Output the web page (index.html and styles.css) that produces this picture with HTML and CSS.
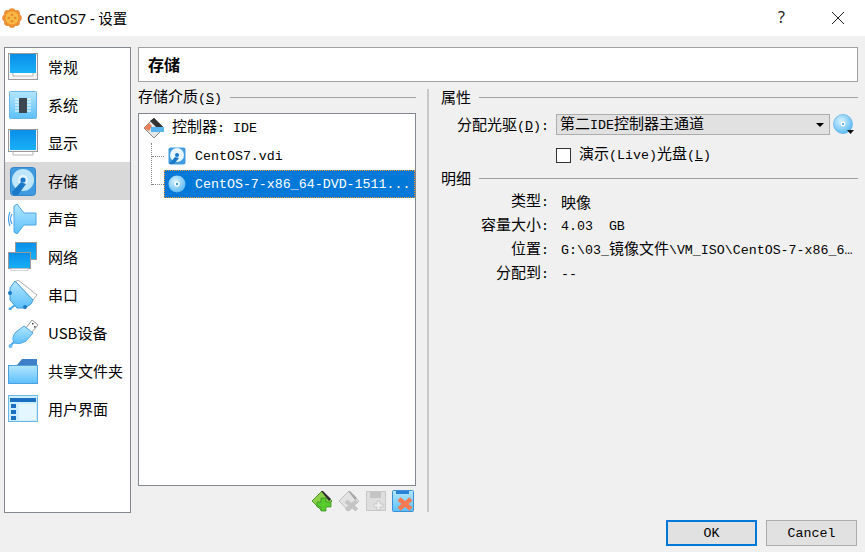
FILE: index.html
```html
<!DOCTYPE html>
<html lang="zh-CN">

<head>
     <meta charset="UTF-8">
     <title>CentOS7 - 设置</title>
     <link rel="stylesheet" href="styles.css">
</head>

<body>
     <svg class="defs" aria-hidden="true">
          <defs>
               <linearGradient id="screen" x1="0" y1="0" x2="0" y2="1">
                    <stop offset="0" stop-color="#0a8ee8"/>
                    <stop offset="1" stop-color="#19b0f8"/>
               </linearGradient>
               <linearGradient id="light" x1="0" y1="0" x2="0" y2="1">
                    <stop offset="0" stop-color="#b4e6ff"/>
                    <stop offset="1" stop-color="#5cc0fa"/>
               </linearGradient>
               <radialGradient id="disc" cx=".4" cy=".35" r=".75">
                    <stop offset="0" stop-color="#d8f2ff"/>
                    <stop offset="1" stop-color="#4db4f2"/>
               </radialGradient>
          </defs>
     </svg>

     <header class="titlebar">
          <svg class="app-icon" width="20" height="20" viewBox="0 0 20 20">
               <g fill="#ee8f35">
                    <circle cx="10" cy="3.6" r="3.4"/><circle cx="10" cy="16.4" r="3.4"/>
                    <circle cx="3.6" cy="10" r="3.4"/><circle cx="16.4" cy="10" r="3.4"/>
                    <circle cx="5.5" cy="5.5" r="3.4"/><circle cx="14.5" cy="5.5" r="3.4"/>
                    <circle cx="5.5" cy="14.5" r="3.4"/><circle cx="14.5" cy="14.5" r="3.4"/>
               </g>
               <circle cx="10" cy="10" r="6.6" fill="#f8b844"/>
               <g fill="#e8862c">
                    <circle cx="10" cy="6.8" r="1.3"/><circle cx="10" cy="13.2" r="1.3"/>
                    <circle cx="6.8" cy="10" r="1.3"/><circle cx="13.2" cy="10" r="1.3"/>
               </g>
          </svg>
          <span class="title-text">CentOS7 - 设置</span>
          <span class="help">?</span>
          <svg class="close" width="14" height="14" viewBox="0 0 14 14">
               <path d="M1 1l12 12M13 1L1 13" stroke="#222" fill="none"/>
          </svg>
     </header>

     <div class="body">
          <nav class="sidebar">
               <a class="nav-item">
                    <svg width="30" height="28" viewBox="0 0 30 28"><rect x=".5" y=".5" width="29" height="26" fill="#f4f4f4" stroke="#9a9a9a"/><rect x="2" y="1" width="26" height="19" fill="url(#screen)"/><path d="M5 20v3h20v-3" fill="#fff" stroke="#b5b5b5"/></svg>
                    <span>常规</span>
               </a>
               <a class="nav-item">
                    <svg width="30" height="28" viewBox="0 0 30 28"><rect x="1.5" y=".5" width="27" height="27" rx="1" fill="url(#light)" stroke="#6cb6e8"/><path d="M7 8h16M7 11h16M7 14h16M7 17h16M7 20h16" stroke="#fff"/><rect x="11" y="7" width="8" height="15" fill="#3c4650"/></svg>
                    <span>系统</span>
               </a>
               <a class="nav-item">
                    <svg width="30" height="28" viewBox="0 0 30 28"><rect x=".5" y=".5" width="29" height="22" fill="#f4f4f4" stroke="#9a9a9a"/><rect x="2" y="1" width="26" height="20" fill="url(#screen)"/><path d="M5 23v3h20v-3" fill="#fff" stroke="#b5b5b5"/></svg>
                    <span>显示</span>
               </a>
               <a class="nav-item is-active">
                    <svg width="30" height="30" viewBox="0 0 30 30"><rect x="2.5" y="1.5" width="25" height="28" rx="3" fill="#3f9be0" stroke="#2f86cc"/><circle cx="15" cy="14" r="11" fill="#bfe6fb"/><circle cx="15" cy="14" r="5" fill="#e4f5ff"/><path d="M4 26l9-10 5 2-8 11H5z" fill="#1b78c8"/><circle cx="15" cy="14" r="2.6" fill="#1b78c8"/></svg>
                    <span>存储</span>
               </a>
               <a class="nav-item">
                    <svg width="30" height="30" viewBox="0 0 30 30"><path d="M6 2l3-2 7 9h12v12H16l-7 9-3-2z" fill="url(#light)" stroke="#4ea8e8"/><path d="M4 10q-3 5 0 10M2 8q-3 7 0 14" stroke="#3d9ae0" stroke-width="1.1" fill="none"/></svg>
                    <span>声音</span>
               </a>
               <a class="nav-item">
                    <svg width="30" height="30" viewBox="0 0 30 30"><rect x="7.5" y=".5" width="21" height="17" fill="url(#screen)" stroke="#9a9a9a"/><rect x=".5" y="10.5" width="22" height="16" fill="url(#screen)" stroke="#9a9a9a"/><path d="M3 26.5h17v2H3z" fill="#fff" stroke="#b5b5b5" stroke-width=".6"/></svg>
                    <span>网络</span>
               </a>
               <a class="nav-item">
                    <svg width="30" height="30" viewBox="0 0 30 30"><path d="M10 0l19 15-4 5L7 2z" fill="#fff" stroke="#aaa"/><path d="M7 1l18 19-2 4-6 4H9L2 20V8z" fill="url(#light)" stroke="#3d9ae0"/><path d="M7 25l-5 4" stroke="#4ea8e8" stroke-width="2"/><circle cx="2" cy="13" r="2" fill="#1b78c8"/><circle cx="17" cy="27" r="2" fill="#1b78c8"/><circle cx="2" cy="29" r="1.5" fill="#4ea8e8"/></svg>
                    <span>串口</span>
               </a>
               <a class="nav-item">
                    <svg width="30" height="30" viewBox="0 0 30 30"><path d="M18 10l6-8 6 5-7 8z" fill="#fff" stroke="#999"/><path d="M24 5h1.5v1.5H24zM26 8h1.5v1.5H26z" fill="#444"/><path d="M16 8l9 7-7 8q-6 4-12 2-3-6 2-11z" fill="url(#light)" stroke="#4ea8e8"/><path d="M6 24l-4 4" stroke="#4ea8e8" stroke-width="2"/><circle cx="2.5" cy="28" r="2" fill="#6cbcf0"/></svg>
                    <span>USB设备</span>
               </a>
               <a class="nav-item">
                    <svg width="30" height="26" viewBox="0 0 30 26"><path d="M1 8l8-1 5-6h15v8z" fill="#3d80c8"/><rect x=".5" y="7.5" width="29" height="18" fill="url(#light)" stroke="#4ea0e0"/></svg>
                    <span>共享文件夹</span>
               </a>
               <a class="nav-item">
                    <svg width="30" height="28" viewBox="0 0 30 28"><rect x=".5" y=".5" width="29" height="26" fill="#cdeeff" stroke="#6cb6e8"/><rect x="2" y="3" width="26" height="4" fill="#1b6fc0"/><path d="M3 9h5v4H3zM3 15h5v4H3zM3 21h5v4H3z" fill="#1b6fc0"/><rect x="11" y="9" width="17" height="16" fill="#e4f6ff"/></svg>
                    <span>用户界面</span>
               </a>
          </nav>

          <main class="page">
               <h1 class="page-title">存储</h1>
               <div class="columns">
                    <section class="media">
                         <div class="group-head"><span>存储介质<span class="mono">(<u>S</u>)</span></span></div>
                         <div class="tree">
                              <div class="tree-row is-controller">
                                   <svg width="22" height="22" viewBox="0 0 22 22"><path d="M11 1l10 10-10 10L1 11z" fill="#e6e6e6" stroke="#888"/><path d="M11 1l10 10-4 3L7 4z" fill="#333"/><path d="M1 11l5-5 3 3-3 5z" fill="#e8805a"/><rect x="8" y="10" width="13" height="5" fill="#58b4f0"/></svg>
                                   <span>控制器<span class="mono">: IDE</span></span>
                              </div>
                              <div class="tree-row is-child">
                                   <svg width="18" height="18" viewBox="0 0 18 18"><rect x=".5" y=".5" width="17" height="17" rx="2" fill="#3f9be0"/><circle cx="9" cy="8" r="7" fill="#e8f7ff"/><path d="M1 17l6-7 4 1-5 6z" fill="#1b78c8"/><circle cx="9" cy="8" r="2" fill="#1b78c8"/></svg>
                                   <span class="mono">CentOS7.vdi</span>
                              </div>
                              <div class="tree-row is-child is-selected">
                                   <svg width="18" height="18" viewBox="0 0 18 18"><circle cx="9" cy="9" r="8.5" fill="url(#disc)"/><circle cx="9" cy="9" r="2.6" fill="#fff"/><circle cx="9" cy="9" r="1.2" fill="#3b9be0"/></svg>
                                   <span class="mono">CentOS-7-x86_64-DVD-1511...</span>
                              </div>
                         </div>
                         <div class="tree-tools">
                              <svg width="22" height="22" viewBox="0 0 22 22"><path d="M11 1l10 10-10 10L1 11z" fill="#8ccf4a" stroke="#4f9c2a"/><path d="M10 1h2l8 8-2 2z" fill="#2e2e2e"/><path d="M10 8h5v4h5v5h-5v4h-5v-4H6v-5h4z" fill="#58cc2c" stroke="#2f8a1c" stroke-width=".7"/></svg>
                              <svg width="22" height="22" viewBox="0 0 22 22"><path d="M11 1l10 10-10 10L1 11z" fill="#e2e2e2" stroke="#c0c0c0"/><path d="M10 1h2l7 7-2 2z" fill="#a8a8a8"/><path d="M8 11l11 9M19 11L8 20" stroke="#c4c4c4" stroke-width="4" fill="none"/></svg>
                              <svg width="22" height="22" viewBox="0 0 22 22"><rect x="1.5" y="1.5" width="19" height="19" fill="#dedede" stroke="#c8c8c8"/><rect x="5" y="2" width="11" height="6" fill="#c4c4c4"/><path d="M12 11h3v3h3v3h-3v3h-3v-3H9v-3h3z" fill="#eee" stroke="#bbb" stroke-width=".6"/></svg>
                              <svg width="22" height="22" viewBox="0 0 22 22"><rect x=".5" y=".5" width="21" height="21" rx="1" fill="url(#light)" stroke="#3a8fd8"/><rect x="4" y="1" width="13" height="3" fill="#2a82d4"/><path d="M7 9l12 10M19 9L7 19" stroke="#f47a52" stroke-width="4.5" fill="none"/></svg>
                         </div>
                    </section>

                    <section class="props">
                         <div class="group-head"><span>属性</span></div>
                         <div class="prop-row prop-drive">
                              <label class="prop-label">分配光驱<span class="mono">(<u>D</u>):</span></label>
                              <div class="select">
                                   <span>第二<span class="mono">IDE</span>控制器主通道</span>
                                   <i class="caret"></i>
                              </div>
                              <svg class="disc-btn" width="22" height="22" viewBox="0 0 22 22"><circle cx="10" cy="10" r="9.5" fill="url(#disc)" stroke="#4ea8e8" stroke-width=".6"/><circle cx="10" cy="10" r="2.4" fill="#fff"/><circle cx="10" cy="10" r="1" fill="#3b9be0"/><path d="M14 16h7l-3.5 4z" fill="#111"/></svg>
                         </div>
                         <div class="live">
                              <i class="checkbox"></i>
                              <span>演示<span class="mono">(Live)</span>光盘<span class="mono">(<u>L</u>)</span></span>
                         </div>
                         <div class="group-head group-details"><span>明细</span></div>
                         <dl class="details">
                              <dt>类型<span class="mono">:</span></dt><dd>映像</dd>
                              <dt>容量大小<span class="mono">:</span></dt><dd><span class="mono">4.03  GB</span></dd>
                              <dt>位置<span class="mono">:</span></dt><dd><span class="mono">G:\03_</span>镜像文件<span class="mono">\VM_ISO\CentOS-7-x86_6…</span></dd>
                              <dt>分配到<span class="mono">:</span></dt><dd><span class="mono">--</span></dd>
                         </dl>
                    </section>
               </div>
          </main>
     </div>

     <footer class="actions">
          <button class="btn is-default">OK</button>
          <button class="btn">Cancel</button>
     </footer>
</body>
</html>
```

FILE: styles.css
```css
html {
     box-sizing: border-box;
     font-family: "Noto Sans CJK SC", sans-serif;
     font-size: 15px;
}

*,
*:before,
*:after {
     box-sizing: inherit;
}

body {
     margin: 0;
     width: 865px;
     height: 552px;
     overflow: hidden;
     display: flex;
     flex-direction: column;
     background-color: #f0f0f0;
     color: #000;
}

.defs {
     position: absolute;
     width: 0;
     height: 0;
}

.mono {
     font-family: "Liberation Mono", monospace;
     font-size: 13.3px;
     white-space: pre;
}

.titlebar {
     height: 36px;
     flex: none;
     display: flex;
     align-items: center;
     padding-left: 2px;
     background-color: #fff;
}

.title-text {
     margin-left: 5px;
     padding-bottom: 2px;
     font-family: "Noto Sans", "Noto Sans CJK SC", sans-serif;
     font-size: 14.5px;
}

.help {
     margin-left: auto;
     padding-bottom: 2px;
     font-family: "Noto Sans", sans-serif;
     font-size: 16px;
     color: #222;
}

.close {
     margin-left: 46px;
     margin-right: 20px;
}

.body {
     flex: none;
     height: 477px;
     padding: 11px 7px 0 4px;
     display: flex;
     gap: 7px;
}

.sidebar {
     width: 127px;
     height: 466px;
     flex: none;
     display: flex;
     flex-direction: column;
     border: 1px solid #828790;
     background-color: #fff;
}

.nav-item {
     height: 38px;
     flex: none;
     display: flex;
     align-items: center;
     padding-left: 3px;
}

.nav-item svg {
     width: 30px;
     flex: none;
}

.nav-item span {
     margin-left: 10px;
     padding-bottom: 2px;
     white-space: nowrap;
}

.nav-item.is-active {
     background-color: #d9d9d9;
}

.page {
     width: 720px;
     display: flex;
     flex-direction: column;
}

.page-title {
     margin: 0;
     height: 35px;
     padding-left: 9px;
     border: 1px solid #a0a0a0;
     background-color: #fff;
     font-size: 16px;
     font-weight: 700;
     line-height: 33px;
}

.columns {
     flex-grow: 1;
     padding-top: 7px;
     display: flex;
}

.media {
     width: 278px;
     flex: none;
     display: flex;
     flex-direction: column;
}

.group-head {
     height: 16px;
     display: flex;
     align-items: center;
     gap: 8px;
     white-space: nowrap;
}

.group-head span {
     line-height: 16px;
}

.group-head:after {
     content: "";
     flex-grow: 1;
     border-top: 1px solid #a0a0a0;
}

.tree {
     position: relative;
     height: 373px;
     margin-top: 8px;
     border: 1px solid #828790;
     background-color: #fff;
}

/* lineas punteadas del arbol */
.tree:before {
     content: "";
     position: absolute;
     left: 12px;
     top: 29px;
     width: 1px;
     height: 42px;
     border-left: 1px dotted #888;
}

.tree-row {
     height: 28px;
     display: flex;
     align-items: center;
     gap: 7px;
     padding-left: 4px;
}

.is-controller span {
     line-height: 20px;
     padding-bottom: 2px;
}

.is-controller .mono {
     padding-bottom: 0;
}

.tree-row.is-child {
     position: relative;
     margin-left: 25px;
     padding-left: 4px;
     gap: 9px;
}

.tree-row.is-child:before {
     content: "";
     position: absolute;
     left: -12px;
     top: 14px;
     width: 12px;
     border-top: 1px dotted #888;
}

.tree-row.is-selected {
     outline: 1px dotted #e8912c;
     outline-offset: -1px;
     background-color: #0078d7;
     color: #fff;
}

.tree-tools {
     margin-top: 4px;
     padding-right: 2px;
     display: flex;
     justify-content: flex-end;
     gap: 5px;
}

.props {
     flex-grow: 1;
     height: 423px;
     margin-left: 11px;
     padding-left: 11px;
     border-left: 2px solid #c8c8c8;
}

.props .group-head {
     padding-left: 1px;
}

.prop-row {
     height: 21px;
     display: flex;
     align-items: center;
}

.prop-drive {
     margin-top: 9px;
}

.prop-label {
     width: 109px;
     flex: none;
     padding-top: 2px;
     text-align: right;
     line-height: 20px;
     white-space: nowrap;
}

.select {
     width: 274px;
     height: 21px;
     margin-left: 7px;
     padding: 0 4px 0 3px;
     display: flex;
     align-items: center;
     justify-content: space-between;
     border: 1px solid #adadad;
     background-color: #e1e1e1;
}

.select span {
     line-height: 19px;
}

.select > span {
     padding-bottom: 1px;
}

.caret {
     margin-right: 1px;
     border-left: 4px solid transparent;
     border-right: 4px solid transparent;
     border-top: 4px solid #000;
}

.disc-btn {
     margin-left: 3px;
}

.live {
     margin: 12px 0 0 116px;
     display: flex;
     align-items: center;
     gap: 8px;
     height: 16px;
}

.live > span {
     padding-bottom: 1px;
     line-height: 20px;
}

.checkbox {
     width: 15px;
     height: 15px;
     border: 1px solid #333;
     background-color: #fff;
}

.group-details {
     margin-top: 7px;
}

.details {
     margin: 4px 0 0;
     display: grid;
     grid-template-columns: 109px 1fr;
     grid-auto-rows: 24px;
     align-items: center;
}

.details dt,
.details dd {
     padding-bottom: 1px;
     line-height: 20px;
     white-space: nowrap;
}

.details dt {
     text-align: right;
}

.details dd {
     margin: 0;
     padding-left: 12px;
}

.actions {
     flex-grow: 1;
     padding: 7px 8px 0 0;
     display: flex;
     justify-content: flex-end;
     align-items: flex-start;
     gap: 9px;
}

.btn {
     width: 91px;
     height: 26px;
     padding: 1px 0 0;
     border: 1px solid #adadad;
     background-color: #e1e1e1;
     font-family: "Liberation Mono", monospace;
     font-size: 13.3px;
     color: #000;
}

.btn.is-default {
     border: 2px solid #0078d7;
}
```
